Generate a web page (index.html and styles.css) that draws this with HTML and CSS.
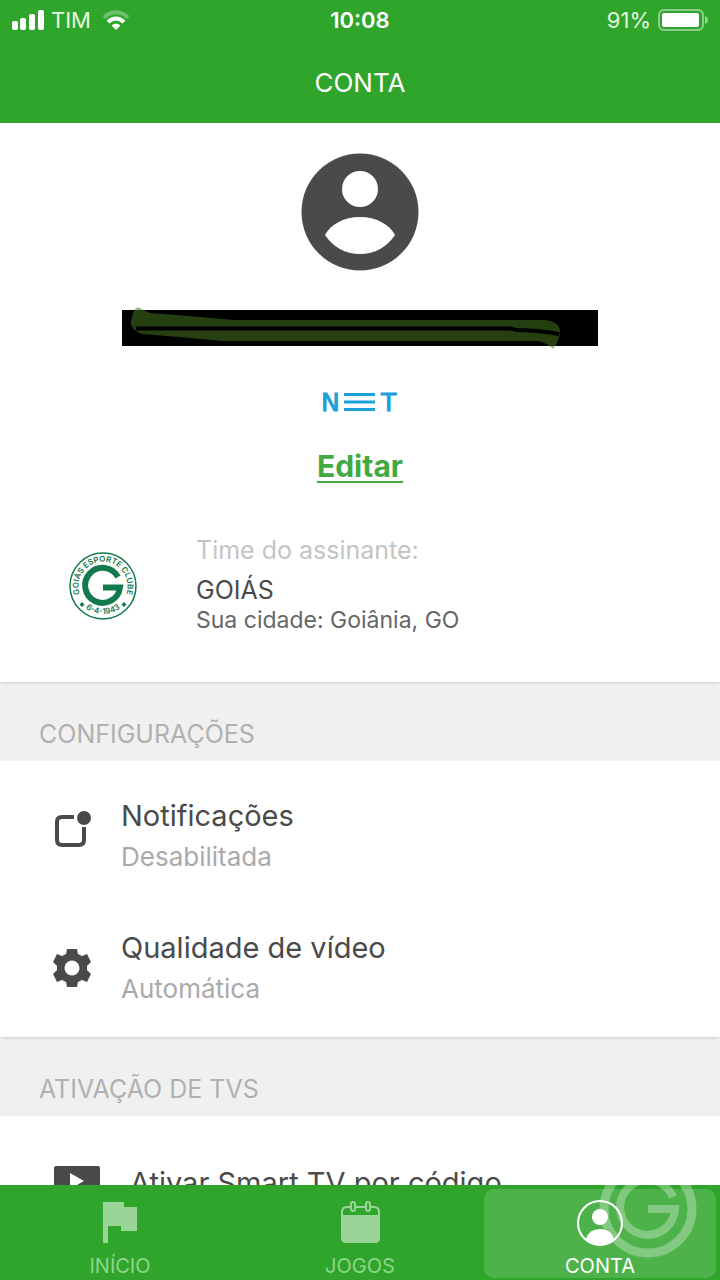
FILE: index.html
```html
<!DOCTYPE html>
<html lang="pt-BR">
<head>
    <meta charset="UTF-8">
    <meta name="viewport" content="width=device-width, initial-scale=1.0">
    <title>Conta</title>
    <link rel="stylesheet" href="styles.css">
</head>
<body>
    <header class="header">
        <div class="status">
            <div class="status-left">
                <svg width="32" height="20" viewBox="0 0 32 20" fill="#fff">
                    <rect x="0" y="11" width="6" height="9" rx="2"/>
                    <rect x="8" y="8" width="6" height="12" rx="2"/>
                    <rect x="17" y="4" width="6" height="16" rx="2"/>
                    <rect x="26" y="0" width="6" height="20" rx="2"/>
                </svg>
                <span>TIM</span>
                <svg class="wifi" width="28" height="20" viewBox="0 0 28 20" fill="none" stroke="#fff" stroke-width="4">
                    <path d="M2 7.5C9 .5 19 .5 26 7.5" opacity=".3"/>
                    <path d="M6 12C11 7.4 17 7.4 22 12"/>
                    <path d="M9.5 15.5C12 13 16 13 18.5 15.5L14 20z" fill="#fff" stroke="none"/>
                </svg>
            </div>
            <span class="time">10:08</span>
            <div class="status-right">
                <span>91%</span>
                <svg width="50" height="22" viewBox="0 0 50 22">
                    <rect x="1" y="1" width="44" height="20" rx="5" fill="none" stroke="#fff" stroke-width="2" opacity=".45"/>
                    <rect x="4" y="4" width="37" height="14" rx="2" fill="#fff"/>
                    <path d="M47 7q3 1 3 4t-3 4z" fill="#fff" opacity=".5"/>
                </svg>
            </div>
        </div>
        <h1>CONTA</h1>
    </header>

    <main class="content">
        <section class="profile">
            <svg class="avatar" width="118" height="118" viewBox="0 0 118 118">
                <circle cx="59" cy="59" r="58.5" fill="#4a4a4a"/>
                <circle cx="59" cy="36" r="18" fill="#fff"/>
                <path d="M24 82C30 71 43 64 59 64s29 7 35 18C86 94 74 101 59 101S32 94 24 82z" fill="#fff"/>
            </svg>
            <div class="name">
                <svg class="marker" viewBox="0 0 476 36" preserveAspectRatio="none">
                    <path d="M16-3Q20-1 28 3Q70 6 112 10H424Q439 12 439 22Q438 31 432 39Q426 33 416 31H100Q60 27 20 24Q5 18 10 8Q11-1 16-3z" fill="#4b7e20" fill-opacity=".5"/>
                    <path d="M14 18.5H388Q393 19 395 20Q415 20 438 24" fill="none" stroke="#000" stroke-width="4"/>
                </svg>
            </div>
            <svg class="net" width="76" height="20" viewBox="0 0 76 20" role="img" aria-label="NET">
                <text x="-1" y="19">N</text>
                <path d="M22 2.500H53M22 10H53M22 17.500H53" stroke="#1ba0dc" stroke-width="3"/>
                <text x="59" y="19">T</text>
            </svg>
            <a class="edit" href="#">Editar</a>
            <div class="team">
                <svg width="70" height="70" viewBox="0 0 70 70">
                    <defs>
                        <path id="arc-top" d="M15.5 50A24.5 24.5 0 1 1 54.5 50"/>
                        <path id="arc-bottom" d="M8 46A30 30 0 0 0 62 46"/>
                    </defs>
                    <circle cx="35" cy="35" r="33" fill="#fff" stroke="#14794e" stroke-width="1.500"/>
                    <text class="crest"><textPath href="#arc-top" startOffset="50%" text-anchor="middle">GOIÁS ESPORTE CLUBE</textPath></text>
                    <text class="crest"><textPath href="#arc-bottom" startOffset="50%" text-anchor="middle">6-4-1943</textPath></text>
                    <path d="M14 51l2.500 2.500L14 56l-2.500-2.500zM56 51l2.500 2.500L56 56l-2.500-2.500z" fill="#14794e"/>
                    <path d="M50 26A17.500 17.500 0 1 0 52 36.500H35" fill="none" stroke="#14794e" stroke-width="6"/>
                </svg>
                <div>
                    <p class="team-label">Time do assinante:</p>
                    <p class="team-name">GOIÁS</p>
                    <p class="team-city">Sua cidade: Goiânia, GO</p>
                </div>
            </div>
        </section>

        <h2>CONFIGURAÇÕES</h2>
        <section class="group">
            <a class="item" href="#">
                <svg width="38" height="50" viewBox="0 0 38 50">
                    <path d="M21 6H9Q4 6 4 11V29Q4 34 9 34H26Q31 34 31 29V16" fill="none" stroke="#4a4a4a" stroke-width="4"/>
                    <circle cx="31" cy="7" r="7" fill="#4a4a4a"/>
                </svg>
                <span>
                    <span class="item-title">Notificações</span>
                    <span class="item-value">Desabilitada</span>
                </span>
            </a>
            <a class="item" href="#">
                <svg width="38" height="38" viewBox="0 0 38 38">
                    <path d="M14 0h10l1 5 4 2 5-2 4 8-4 4v4l4 4-4 8-5-2-4 2-1 5H14l-1-5-4-2-5 2-4-8 4-4v-4l-4-4 4-8 5 2 4-2z" fill="#4a4a4a"/>
                    <circle cx="19" cy="19" r="7.500" fill="#fff"/>
                </svg>
                <span>
                    <span class="item-title">Qualidade de vídeo</span>
                    <span class="item-value">Automática</span>
                </span>
            </a>
        </section>

        <h2>ATIVAÇÃO DE TVS</h2>
        <section class="group">
            <a class="item item-tv" href="#">
                <svg width="47" height="34" viewBox="0 0 47 34">
                    <rect x="1" width="46" height="30" rx="2" fill="#4a4a4a"/>
                    <path d="M17 7l14 8-14 8z" fill="#fff"/>
                    <path d="M15 30h18v4H15z" fill="#4a4a4a"/>
                </svg>
                <span class="item-title">Ativar Smart TV por código</span>
            </a>
        </section>
    </main>

    <nav class="tabs">
        <a class="tab" href="#">
            <svg width="46" height="46" viewBox="0 0 46 46">
                <path d="M6 2h21v5h13v24H24v-5H11v17H6z" fill="#9ad497"/>
            </svg>
            <span>INÍCIO</span>
        </a>
        <a class="tab" href="#">
            <svg width="46" height="46" viewBox="0 0 46 46" fill="#9ad497">
                <path d="M4 15h39v23q0 5-5 5H9q-5 0-5-5z"/>
                <path d="M5 17v-5q0-5 5-5H14M18 7h11M33 7h4q5 0 5 5v5" fill="none" stroke="#9ad497" stroke-width="2"/>
                <rect x="14" y="2" width="4" height="9" rx="2" fill="none" stroke="#9ad497" stroke-width="2"/>
                <rect x="29" y="2" width="4" height="9" rx="2" fill="none" stroke="#9ad497" stroke-width="2"/>
            </svg>
            <span>JOGOS</span>
        </a>
        <a class="tab active" href="#">
            <svg width="46" height="46" viewBox="0 0 46 46">
                <circle cx="23" cy="23" r="22" fill="none" stroke="#fff" stroke-width="2"/>
                <circle cx="23" cy="17" r="8" fill="#fff"/>
                <path d="M9 39Q12 29 23 29t14 10Q31 45 23 45T9 39z" fill="#fff"/>
            </svg>
            <span>CONTA</span>
        </a>
        <svg class="watermark" width="98" height="98" viewBox="0 0 98 98" fill="none" stroke="#fff">
            <circle cx="49" cy="49" r="44" stroke-width="9"/>
            <path d="M74 37A27.500 27.500 0 1 0 76 49H49" stroke-width="8"/>
        </svg>
    </nav>
</body>
</html>
```
FILE: styles.css
```css
* {
    box-sizing: border-box;
}
body {
    font-family: Inter, "Liberation Sans", sans-serif;
    background: #fff;
    color: #4a4a4a;
    display: flex;
    flex-direction: column;
    height: 100vh;
    margin: 0;
    overflow: hidden;
}
svg {
    display: block;
    flex-shrink: 0;
}
a {
    color: inherit;
    text-decoration: none;
}
h1, h2, p {
    margin: 0;
}
.header {
    background: #30a52c;
    color: #fff;
    text-align: center;
    flex-shrink: 0;
}
.status {
    display: grid;
    grid-template-columns: 1fr auto 1fr;
    align-items: center;
    height: 40px;
    padding: 0 12px;
    font-size: 22px;
}
.status-left, .status-right {
    display: flex;
    align-items: center;
    gap: 7px;
    color: #e4f7e0;
}
.status-right {
    justify-content: flex-end;
}
.wifi {
    margin-left: 4px;
}
.time {
    font-weight: 600;
}
h1 {
    font-size: 26px;
    font-weight: 400;
    line-height: 32px;
    padding: 27px 0 24px;
}
.content {
    flex: 1;
    min-height: 0;
    overflow: hidden;
    background: #f0f0f0;
}
.profile {
    display: flex;
    flex-direction: column;
    align-items: center;
    background: #fff;
    padding: 30px 0 44px;
    box-shadow: 0 2px 3px -1px rgba(0, 0, 0, 0.15);
}
.name {
    width: 66%;
    height: 36px;
    margin-top: 39px;
    background: #000;
}
.marker {
    width: 100%;
    height: 100%;
    overflow: visible;
}
.net {
    margin-top: 46px;
    fill: #1ba0dc;
    font-family: "DejaVu Sans", sans-serif;
    font-size: 25px;
    stroke: #1ba0dc;
    overflow: visible;
}
.edit {
    margin-top: 36px;
    color: #43a941;
    font-size: 30px;
    font-weight: 700;
    line-height: 36px;
    text-decoration: underline;
    text-decoration-thickness: 2px;
    text-underline-offset: 4px;
}
.team {
    display: flex;
    align-items: center;
    align-self: stretch;
    gap: 58px;
    margin-top: 50px;
    padding-left: 68px;
}
.crest {
    fill: #14794e;
    font-size: 8px;
    font-weight: 600;
}
.team-label {
    color: #c4c4c4;
    font-size: 25px;
    font-weight: 400;
    line-height: 32px;
}
.team-name {
    font-size: 25px;
    font-weight: 400;
    line-height: 32px;
    margin-top: 8px;
}
.team-city {
    color: #666;
    font-size: 23px;
    line-height: 28px;
    padding-bottom: 4px;
}
h2 {
    color: #b0b0b0;
    font-size: 25px;
    font-weight: 400;
    line-height: 32px;
    padding: 36px 39px 11px;
}
.group {
    background: #fff;
    padding: 35px 0 29px;
    box-shadow: 0 2px 3px -1px rgba(0, 0, 0, 0.15);
}
.item {
    display: flex;
    align-items: center;
    gap: 30px;
    padding-left: 53px;
}
.item + .item {
    margin-top: 52px;
}
.item-tv {
    padding-top: 12px;
}
.item-title, .item-value {
    display: block;
}
.item-title {
    font-size: 29px;
    line-height: 40px;
}
.item-value {
    color: #aaa;
    font-size: 26px;
    line-height: 38px;
    padding-top: 2px;
}
.tabs {
    position: relative;
    display: grid;
    grid-template-columns: 1fr 1fr 1fr;
    flex-shrink: 0;
    height: 95px;
    padding: 4px 0;
    background: #30a52c;
    color: #8fd58b;
    font-size: 20px;
}
.tab {
    display: flex;
    flex-direction: column;
    align-items: center;
    gap: 8px;
    padding-top: 11px;
    line-height: 24px;
}
.active {
    background: #4eb24a;
    border-radius: 10px;
    color: #fff;
    margin: 0 4px;
}
.watermark {
    position: absolute;
    right: 23px;
    bottom: 22px;
    opacity: 0.3;
}
```
